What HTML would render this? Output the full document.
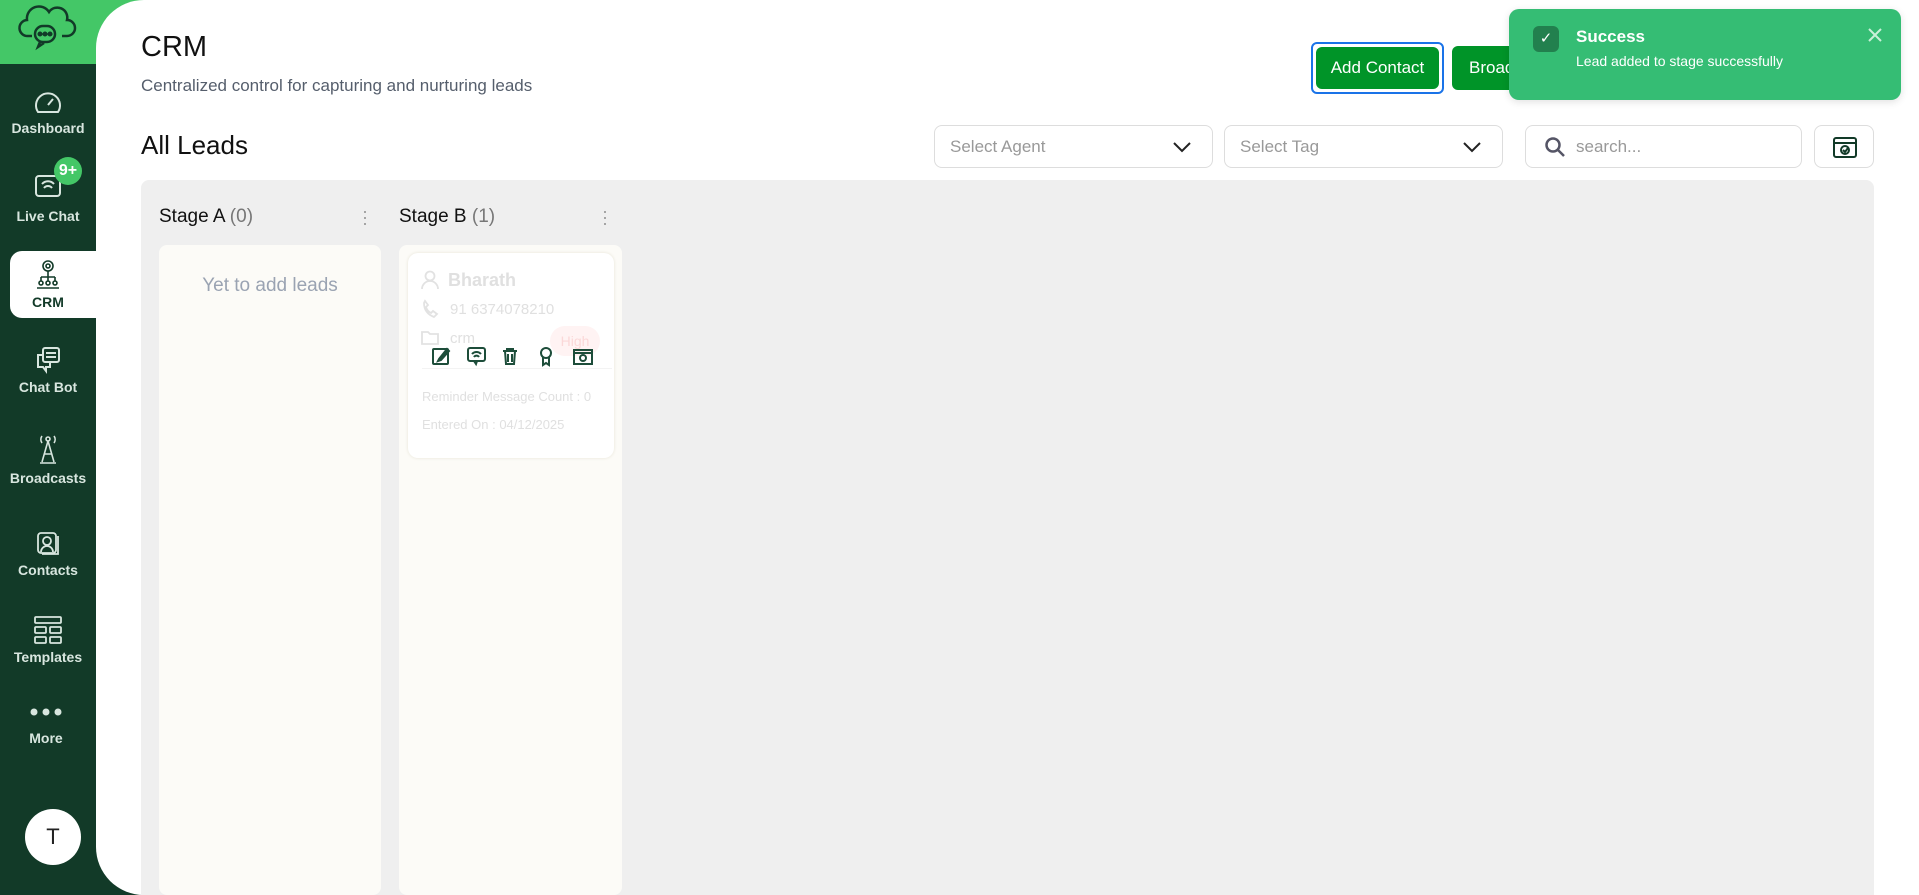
<!DOCTYPE html>
<html><head><meta charset="utf-8"><style>
*{box-sizing:border-box;margin:0;padding:0}
body{width:1919px;height:895px;overflow:hidden;background:#123a28;font-family:"Liberation Sans",sans-serif;position:relative}
.abs{position:absolute}
.hdr{left:0;top:0;width:96px;height:64px;background:#44c767}
.main{left:96px;top:0;width:1823px;height:895px;background:#fff;border-radius:48px 0 0 48px}
.greenfill{left:96px;top:0;width:60px;height:64px;background:#44c767}
.nav{left:0;width:96px;text-align:center;color:#d8e6df;font-size:14px;font-weight:bold}
.nav svg{display:block;margin:0 auto 4px}
.act{left:10px;top:251px;width:86px;height:67px;background:#fff;border-radius:12px 0 0 12px}
.btn{background:#009428;color:#fff;font-size:17px;border-radius:6px;display:flex;align-items:center;justify-content:center}
.sel{border:1.5px solid #ddd;border-radius:8px;color:#999;font-size:17px;display:flex;align-items:center;padding-left:15px}
.col{background:#fcfbf7;border-radius:8px}
.muted{color:#e0e0e0}
</style></head><body>
<div class="abs hdr"></div>
<div class="abs greenfill"></div>
<div class="abs main"></div>
<svg class="abs" style="left:18px;top:2px" width="60" height="50" viewBox="0 0 60 50" fill="none" stroke="#123a28" stroke-width="2.5"><path d="M14 34 H10 a8 8 0 0 1 -1 -16 a12 12 0 0 1 22 -8 a10 10 0 0 1 18 8 a8 8 0 0 1 0 16 H44"/><rect x="17" y="24" width="20" height="16" rx="8"/><path d="M22 40 l-2 5 6-4"/><circle cx="22" cy="32" r="1.3" fill="#123a28"/><circle cx="27" cy="32" r="1.3" fill="#123a28"/><circle cx="32" cy="32" r="1.3" fill="#123a28"/></svg>

<div class="abs nav" style="top:90px"><svg width="30" height="26" viewBox="0 0 30 26" fill="none" stroke="#d8e6df" stroke-width="2"><path d="M5 22 a12 12 0 1 1 20 0 Z"/><path d="M15 15 l5-6"/></svg>Dashboard</div>
<div class="abs nav" style="top:170px"><svg width="30" height="34" viewBox="0 0 30 34" fill="none" stroke="#d8e6df" stroke-width="2"><rect x="3" y="6" width="24" height="20" rx="3"/><path d="M9 14 a8 8 0 0 1 12 0 M11 18 a5 5 0 0 1 8 0"/></svg>Live Chat</div>
<div class="abs" style="left:54px;top:157px;width:28px;height:28px;border-radius:50%;background:#44c767;color:#fff;font-weight:bold;font-size:16px;text-align:center;line-height:28px">9+</div>
<div class="abs act"></div>
<div class="abs nav" style="top:258px;color:#123a28"><svg width="30" height="32" viewBox="0 0 30 32" fill="none" stroke="#123a28" stroke-width="1.6"><circle cx="15" cy="8" r="5"/><circle cx="15" cy="8" r="2"/><path d="M15 13 v6 M8 19 h14 M8 19 v4 M22 19 v4 M15 19 v4"/><circle cx="8" cy="25" r="2"/><circle cx="15" cy="25" r="2"/><circle cx="22" cy="25" r="2"/><path d="M4 30 h22"/></svg>CRM</div>
<div class="abs nav" style="top:345px"><svg width="30" height="30" viewBox="0 0 30 30" fill="none" stroke="#d8e6df" stroke-width="2"><rect x="10" y="3" width="16" height="14" rx="2"/><path d="M13 8h10 M13 12h10"/><path d="M10 10 H5 v12 h5 l3 4 v-4 h4 v-5"/></svg>Chat Bot</div>
<div class="abs nav" style="top:434px"><svg width="30" height="32" viewBox="0 0 30 32" fill="none" stroke="#d8e6df" stroke-width="1.6"><circle cx="15" cy="5" r="2"/><path d="M9 2 a6 6 0 0 0 0 7 M21 2 a6 6 0 0 1 0 7 M15 7 L9 28 M15 7 L21 28 M7 29 h16 M11 20 h8"/></svg>Broadcasts</div>
<div class="abs nav" style="top:530px"><svg width="30" height="28" viewBox="0 0 30 28" fill="none" stroke="#d8e6df" stroke-width="1.8"><rect x="5" y="3" width="18" height="20" rx="3"/><circle cx="14" cy="11" r="4"/><path d="M8 22 a6 6 0 0 1 12 0 M25 6 v18 h-16"/></svg>Contacts</div>
<div class="abs nav" style="top:615px"><svg width="32" height="30" viewBox="0 0 32 30" fill="none" stroke="#d8e6df" stroke-width="1.8"><rect x="3" y="2" width="26" height="6" rx="1"/><rect x="3" y="12" width="11" height="6" rx="1"/><rect x="18" y="12" width="11" height="6" rx="1"/><rect x="3" y="22" width="11" height="6" rx="1"/><rect x="18" y="22" width="11" height="6" rx="1"/></svg>Templates</div>
<div class="abs nav" style="top:705px;left:-2px"><svg width="36" height="14" viewBox="0 0 36 14"><circle cx="6" cy="7" r="3.5" fill="#d8e6df"/><circle cx="18" cy="7" r="3.5" fill="#d8e6df"/><circle cx="30" cy="7" r="3.5" fill="#d8e6df"/></svg><div style="margin-top:11px">More</div></div>
<div class="abs" style="left:25px;top:809px;width:56px;height:56px;border-radius:50%;background:#fff;text-align:center;line-height:56px;font-size:22px;color:#222">T</div>

<div class="abs" style="left:141px;top:31px;font-size:29px;color:#111">CRM</div>
<div class="abs" style="left:141px;top:76px;font-size:17px;color:#555e6c">Centralized control for capturing and nurturing leads</div>
<div class="abs" style="left:141px;top:130px;font-size:26px;color:#111">All Leads</div>

<div class="abs btn" style="left:1311px;top:42px;width:133px;height:52px;border:2px solid #1a73e8;padding:3px;background:#fff"><div class="btn" style="width:100%;height:100%">Add Contact</div></div>
<div class="abs btn" style="left:1452px;top:46px;width:120px;height:44px;justify-content:flex-start;padding-left:17px">Broadcast</div>

<div class="abs sel" style="left:934px;top:125px;width:279px;height:43px">Select Agent<svg style="position:absolute;right:20px" width="20" height="12" viewBox="0 0 20 12" fill="none" stroke="#222" stroke-width="2"><path d="M2 2 l8 8 8-8"/></svg></div>
<div class="abs sel" style="left:1224px;top:125px;width:279px;height:43px">Select Tag<svg style="position:absolute;right:20px" width="20" height="12" viewBox="0 0 20 12" fill="none" stroke="#222" stroke-width="2"><path d="M2 2 l8 8 8-8"/></svg></div>
<div class="abs sel" style="left:1525px;top:125px;width:277px;height:43px;padding-left:18px"><svg width="22" height="22" viewBox="0 0 22 22" fill="none" stroke="#556" stroke-width="2.5"><circle cx="9" cy="9" r="6.5"/><path d="M14 14 l6 6"/></svg><span style="margin-left:10px">search...</span></div>
<div class="abs sel" style="left:1814px;top:125px;width:60px;height:43px;padding-left:17px"><svg width="26" height="26" viewBox="0 0 26 26" fill="none" stroke="#123a28" stroke-width="2"><rect x="2" y="4" width="22" height="19" rx="2"/><path d="M2 9h22"/><circle cx="13" cy="16" r="4"/><path d="M11 16 l2 2 3-4"/></svg></div>

<div class="abs" style="left:141px;top:180px;width:1733px;height:715px;background:#efefef;border-radius:8px 8px 0 0"></div>
<div class="abs" style="left:159px;top:206px;font-size:19px;color:#111">Stage A <span style="color:#777">(0)</span></div>
<div class="abs" style="left:362px;top:208px;color:#999;font-size:18px;line-height:6px">·<br>·<br>·</div>
<div class="abs" style="left:399px;top:206px;font-size:19px;color:#111">Stage B <span style="color:#777">(1)</span></div>
<div class="abs" style="left:602px;top:208px;color:#999;font-size:18px;line-height:6px">·<br>·<br>·</div>
<div class="abs col" style="left:159px;top:245px;width:222px;height:650px"></div>
<div class="abs" style="left:159px;top:275px;width:222px;text-align:center;font-size:19px;color:#9aa3b2">Yet to add leads</div>
<div class="abs col" style="left:399px;top:245px;width:223px;height:650px"></div>
<div class="abs" style="left:408px;top:253px;width:206px;height:205px;background:#fff;border-radius:10px;box-shadow:0 0 3px #e6e3d6"></div>
<svg class="abs" style="left:420px;top:270px" width="20" height="80" viewBox="0 0 20 80" fill="none" stroke="#e2e2e2" stroke-width="1.8"><circle cx="10" cy="6" r="4.5"/><path d="M2 19 a8 8 0 0 1 16 0"/><path d="M4 33 q0 10 10 14 l3-3 -4-3 -2 2 q-4-2 -5-6 l2-2 -3-4z"/><path d="M2 62 h6 l2 2 h8 v10 h-16z"/></svg>
<div class="abs muted" style="left:448px;top:270px;font-size:18px;font-weight:bold">Bharath</div>
<div class="abs muted" style="left:450px;top:301px;font-size:15px">91 6374078210</div>
<div class="abs muted" style="left:450px;top:330px;font-size:15px">crm</div>
<div class="abs" style="left:550px;top:326px;width:50px;height:30px;border-radius:15px;background:#fff3f3;color:#fbd8d8;font-size:14px;text-align:center;line-height:30px">High</div>
<div class="abs" style="left:422px;top:368px;width:190px;border-top:1px solid #f3f3f3"></div>
<div class="abs muted" style="left:422px;top:389px;font-size:13px">Reminder Message Count : 0</div>
<div class="abs muted" style="left:422px;top:417px;font-size:13px">Entered On : 04/12/2025</div>
<svg class="abs" style="left:430px;top:345px" width="170" height="22" viewBox="0 0 170 22" fill="none" stroke="#1d4d3a" stroke-width="2"><rect x="3" y="4" width="15" height="15" rx="1"/><path d="M9 14 l8-10 2 2 -8 9 -3 1z" fill="#1d4d3a"/><rect x="38" y="3" width="17" height="13" rx="2"/><path d="M42 9 a6 6 0 0 1 9 0 M44 12 a3 3 0 0 1 5 0 M44 16 l2 3 1-3"/><path d="M73 6 h14 M77 6 v-2 h6 v2 M75 6 l1 13 h8 l1-13 M78 9 v8 M82 9 v8"/><circle cx="116" cy="8" r="5"/><path d="M113 12 v8 l3-2 3 2 v-8"/><path d="M144 5 h18 v14 h-18z M144 8 h18"/><circle cx="153" cy="13" r="3"/></svg>

<div class="abs" style="left:1509px;top:9px;width:392px;height:91px;background:#35bd74;border-radius:10px;box-shadow:0 2px 8px rgba(0,0,0,.12)"></div>
<div class="abs" style="left:1533px;top:26px;width:26px;height:26px;background:#22804e;border-radius:6px;color:#fff;text-align:center;line-height:26px;font-size:15px">✓</div>
<div class="abs" style="left:1576px;top:27px;color:#fff;font-size:17px;font-weight:bold">Success</div>
<div class="abs" style="left:1576px;top:53px;color:#fff;font-size:14px">Lead added to stage successfully</div>
<svg class="abs" style="left:1867px;top:27px" width="16" height="16" viewBox="0 0 16 16" stroke="#c9f0d9" stroke-width="2"><path d="M2 2 14 14 M14 2 2 14"/></svg>
</body></html>
